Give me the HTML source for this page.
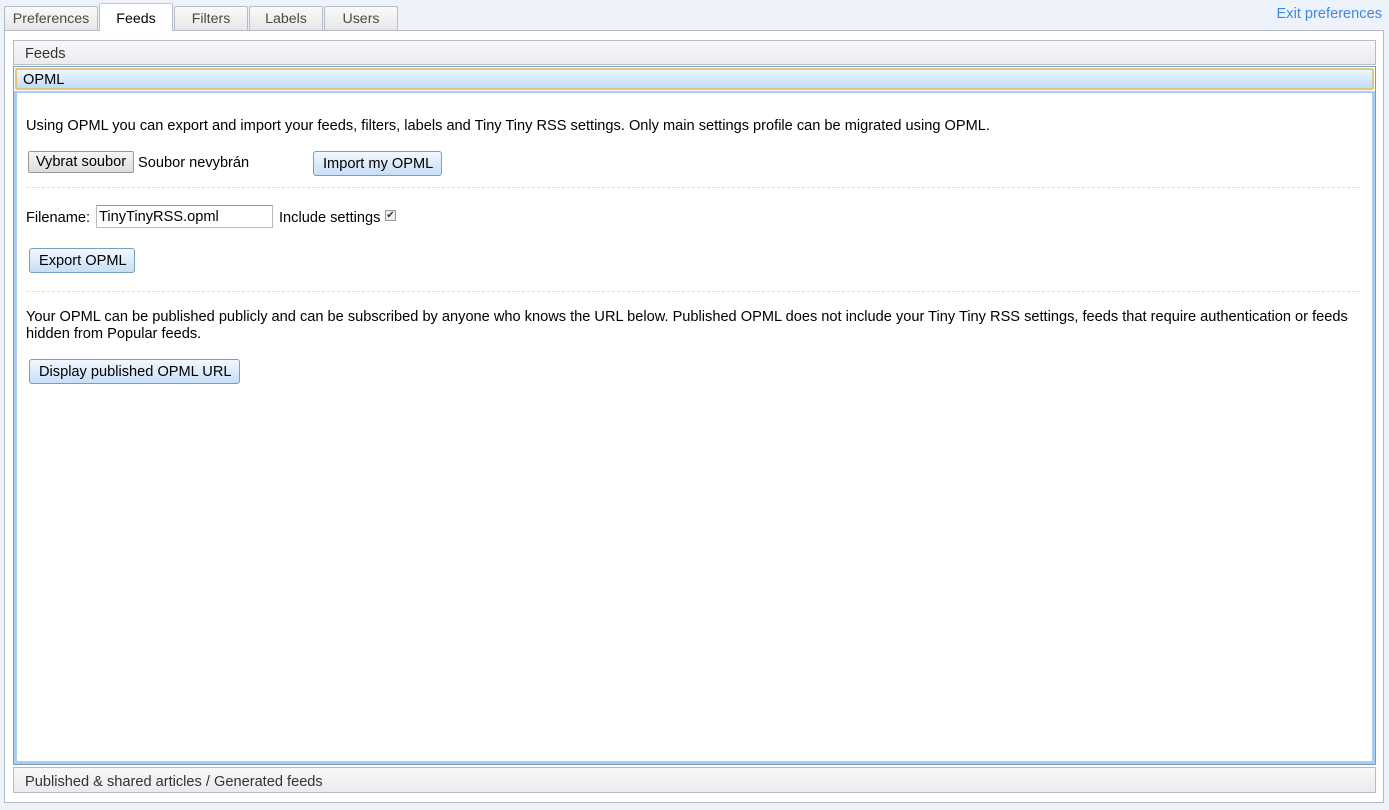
<!DOCTYPE html>
<html><head><meta charset="utf-8"><style>
*{box-sizing:border-box}
body{margin:0;width:1389px;height:810px;background:#eef3fb;font-family:"Liberation Sans",sans-serif;font-size:14.6px;color:#000;position:relative;overflow:hidden}
.tab{position:absolute;top:6px;height:25px;border:1px solid #b5bcc7;border-bottom:none;background:linear-gradient(#fafafa,#e6e6e6);color:#4a4a4a;font-size:14.2px;text-align:center;line-height:25px;border-radius:2px 2px 0 0}
.tab.act{top:3px;height:28px;background:#fff;color:#000;line-height:31px;z-index:2;border-top:1px solid #aecbe9}
#exit{position:absolute;right:7px;top:6px;color:#3f88dd;font-size:14.6px}
#cont{position:absolute;left:4px;top:30px;width:1380px;height:773px;background:#fff;border:1px solid #b5bcc7}
.title{position:absolute;left:13px;width:1363px;border:1px solid #b5bcc7;background:linear-gradient(#f7f8f9,#e9ebee);color:#333;font-size:14.6px;padding-left:11px}
#opml{position:absolute;left:13px;top:66px;width:1363px;height:699px;border:1px solid #769dc0;background:#fff}
#opt{position:absolute;left:1px;top:1px;right:1px;height:22px;border:2px solid #e0c57e;border-radius:2px;background:linear-gradient(#eef6ff,#bfdcf9);padding-left:6px;line-height:20px;font-size:14.6px}
#pane{position:absolute;left:0;top:24px;right:0;bottom:0;border:3px solid #a9cdf1;border-top:2px solid #a9cdf1}
.btn{position:absolute;height:24px;border:1px solid #7b9ebd;border-radius:3px;background:linear-gradient(#f2f8ff,#c6def6);font-size:14.6px;padding:0 9px;line-height:22px;white-space:nowrap}
.t{position:absolute;font-size:14.6px;white-space:nowrap}
hr{position:absolute;border:none;border-top:1px dashed #ddd;margin:0;left:27px;width:1333px}
</style></head><body>
<div class="tab" style="left:4px;width:94px">Preferences</div>
<div class="tab act" style="left:99px;width:74px">Feeds</div>
<div class="tab" style="left:174px;width:74px">Filters</div>
<div class="tab" style="left:249px;width:74px">Labels</div>
<div class="tab" style="left:324px;width:74px">Users</div>
<div id="exit">Exit preferences</div>
<div id="cont"></div>
<div class="title" style="top:40px;height:25px;line-height:26px">Feeds</div>
<div id="opml"><div id="opt">OPML</div><div id="pane"></div></div>
<div class="title" style="top:767px;height:26px;line-height:28px">Published &amp; shared articles / Generated feeds</div>
<div class="t" style="left:26px;top:118px">Using OPML you can export and import your feeds, filters, labels and Tiny Tiny RSS settings. Only main settings profile can be migrated using OPML.</div>
<div style="position:absolute;left:28px;top:151px;width:106px;height:22px;border:1px solid #999;border-radius:2px;background:linear-gradient(#f6f6f6,#dcdcdc);font-size:14.6px;text-align:center;line-height:21px;white-space:nowrap">Vybrat soubor</div>
<div class="t" style="left:138px;top:155px">Soubor nevybrán</div>
<div class="btn" style="left:313px;top:151px;width:129px;height:25px;line-height:24px">Import my OPML</div>
<hr style="top:187px">
<div class="t" style="left:26px;top:210px">Filename:</div>
<div style="position:absolute;left:96px;top:205px;width:177px;height:23px;border:1px solid #bbb;border-top-color:#999;font-size:14.6px;padding-left:2px;line-height:22px">TinyTinyRSS.opml</div>
<div class="t" style="left:279px;top:210px">Include settings</div>
<div style="position:absolute;left:385px;top:210px;width:11px;height:11px;border:1px solid #999;background:#eee;font-size:10px;line-height:9px;text-align:center;color:#333">✔</div>
<div class="btn" style="left:29px;top:248px;width:106px;height:25px;line-height:24px">Export OPML</div>
<hr style="top:291px">
<div class="t" style="left:26px;top:309px;line-height:17px">Your OPML can be published publicly and can be subscribed by anyone who knows the URL below. Published OPML does not include your Tiny Tiny RSS settings, feeds that require authentication or feeds<br>hidden from Popular feeds.</div>
<div class="btn" style="left:29px;top:359px;width:211px;height:25px;line-height:24px">Display published OPML URL</div>
</body></html>
